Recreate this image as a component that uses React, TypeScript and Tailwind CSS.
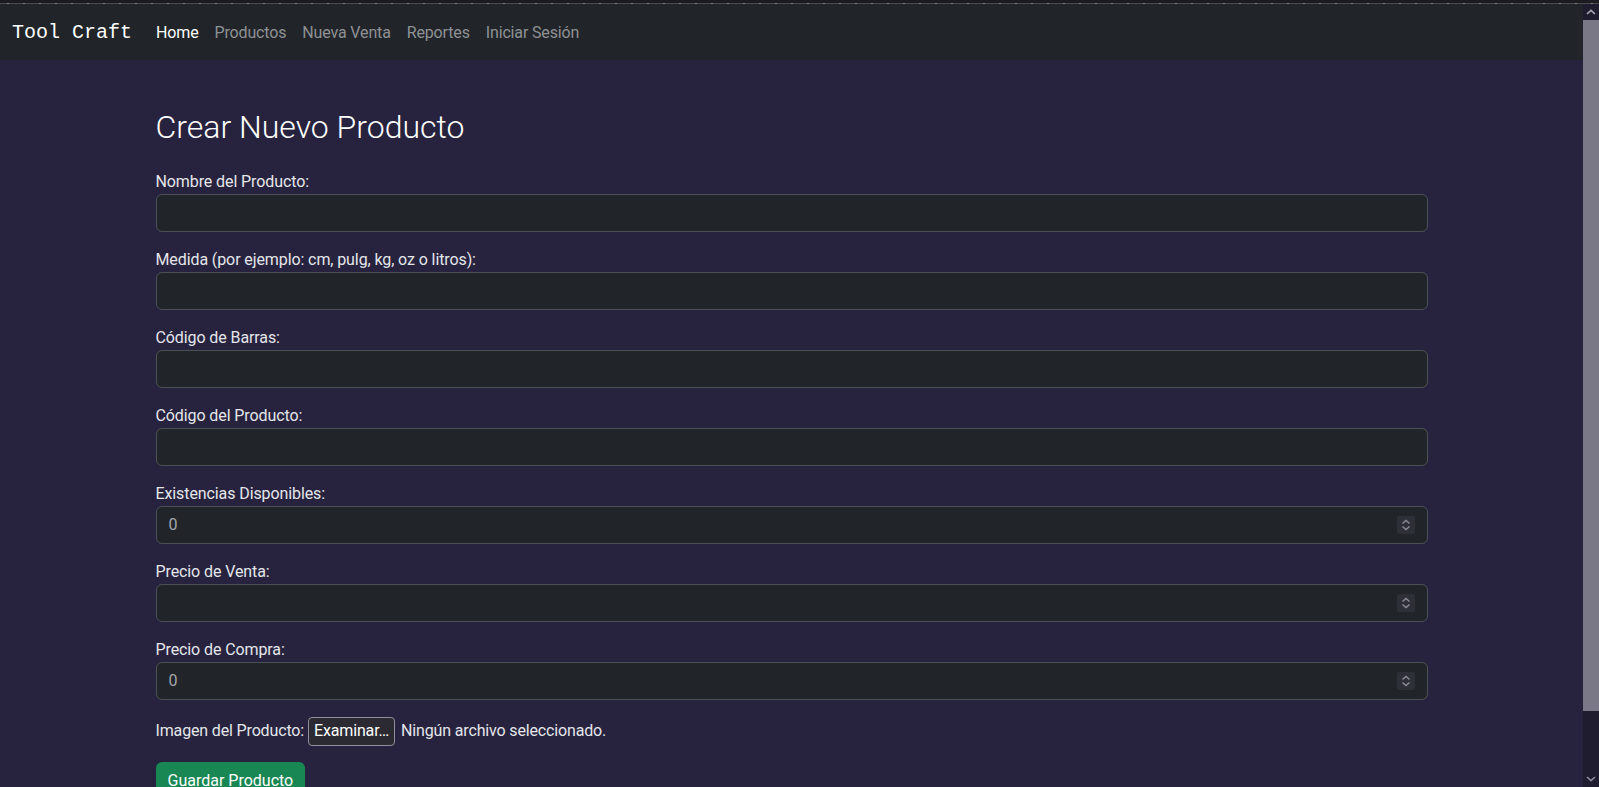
import type { ReactNode } from "react";

const fields: { label: string; type: "text" | "number"; value?: string }[] = [
  { label: "Nombre del Producto:", type: "text" },
  { label: "Medida (por ejemplo: cm, pulg, kg, oz o litros):", type: "text" },
  { label: "Código de Barras:", type: "text" },
  { label: "Código del Producto:", type: "text" },
  { label: "Existencias Disponibles:", type: "number", value: "0" },
  { label: "Precio de Venta:", type: "number" },
  { label: "Precio de Compra:", type: "number", value: "0" },
];

const links = ["Home", "Productos", "Nueva Venta", "Reportes", "Iniciar Sesión"];

function Spinner() {
  return (
    <span className="absolute right-[12px] top-1/2 flex h-[18px] w-[18px] -translate-y-1/2 items-center justify-center rounded-[2px] bg-[#2e3037]">
      <svg width="18" height="18" viewBox="0 0 18 18" fill="none" stroke="#8d8c99" strokeWidth="1.4">
        <path d="M5.5 7.5 9 4.5l3.5 3" />
        <path d="M5.5 10.5 9 13.5l3.5-3" />
      </svg>
    </span>
  );
}

function Field({ label, type, value }: { label: string; type: "text" | "number"; value?: string }) {
  return (
    <div className="mb-4">
      <label className="block text-[16px] leading-[24px] tracking-[-0.1px] text-[#e4e6ea]">{label}</label>
      <div className="relative h-[38px] rounded-[6px] border border-[#4c5157] bg-[#212529] px-3">
        <span className="block text-[16px] leading-[36px] text-[#a3a7ad]">{value}</span>
        {type === "number" && <Spinner />}
      </div>
    </div>
  );
}

function ScrollBar(): ReactNode {
  return (
    <div className="flex w-[16px] shrink-0 flex-col bg-[#1f1c30]">
      <div className="flex h-[16px] items-center justify-center">
        <svg width="10" height="6" viewBox="0 0 10 6" fill="none" stroke="#a9a7b3" strokeWidth="1.6">
          <path d="M1 5 5 1.3 9 5" />
        </svg>
      </div>
      <div className="h-[691px] bg-[#7a7786]" />
      <div className="flex-1" />
      <div className="flex h-[16px] items-center justify-center">
        <svg width="10" height="6" viewBox="0 0 10 6" fill="none" stroke="#8a8896" strokeWidth="1.6">
          <path d="M1 1 5 4.7 9 1" />
        </svg>
      </div>
    </div>
  );
}

export default function App() {
  return (
    <div className="flex h-[787px] w-[1599px] flex-col overflow-hidden bg-[#27233e] font-['Roboto',sans-serif]">
      <div className="h-[3px] bg-[#1c1b22]" />
      <div className="h-px bg-[repeating-linear-gradient(90deg,#4a4a4d_0px,#4a4a4d_7px,#77777a_7px,#77777a_9px,#4a4a4d_9px,#4a4a4d_16px)]" />
      <div className="flex min-h-0 flex-1">
        <div className="flex min-w-0 flex-1 flex-col">
          <nav className="flex h-[56px] shrink-0 items-center bg-[#212529] px-3 pt-[2px]">
            <span className="mr-4 font-['Liberation_Mono',monospace] text-[20px] leading-[30px] text-white">Tool Craft</span>
            <ul className="flex">
              {links.map((l, i) => (
                <li
                  key={l}
                  className={`px-2 text-[16px] leading-[24px] tracking-[-0.15px] ${i === 0 ? "text-white" : "text-[#8f9194]"}`}
                >
                  {l}
                </li>
              ))}
            </ul>
          </nav>
          <main className="mx-auto mt-12 w-[1272px]">
            <h2 className="mb-6 text-[32px] font-light leading-[38px] text-white">Crear Nuevo Producto</h2>
            {fields.map((f) => (
              <Field key={f.label} {...f} />
            ))}
            <div className="mb-4 flex h-[30px] items-center text-[16px] tracking-[-0.15px] text-[#e4e6ea]">
              <span>Imagen del Producto:</span>
              <span className="ml-[4px] flex h-[29px] items-center rounded-[4px] border border-[#8f8f9d] bg-[#2b2a33] px-[5px] text-white">
                Examinar…
              </span>
              <span className="ml-[6px]">Ningún archivo seleccionado.</span>
            </div>
            <button type="button" className="h-[38px] rounded-[6px] bg-[#198754] px-3 text-[16px] leading-[24px] text-white">
              Guardar Producto
            </button>
          </main>
        </div>
        <ScrollBar />
      </div>
    </div>
  );
}
